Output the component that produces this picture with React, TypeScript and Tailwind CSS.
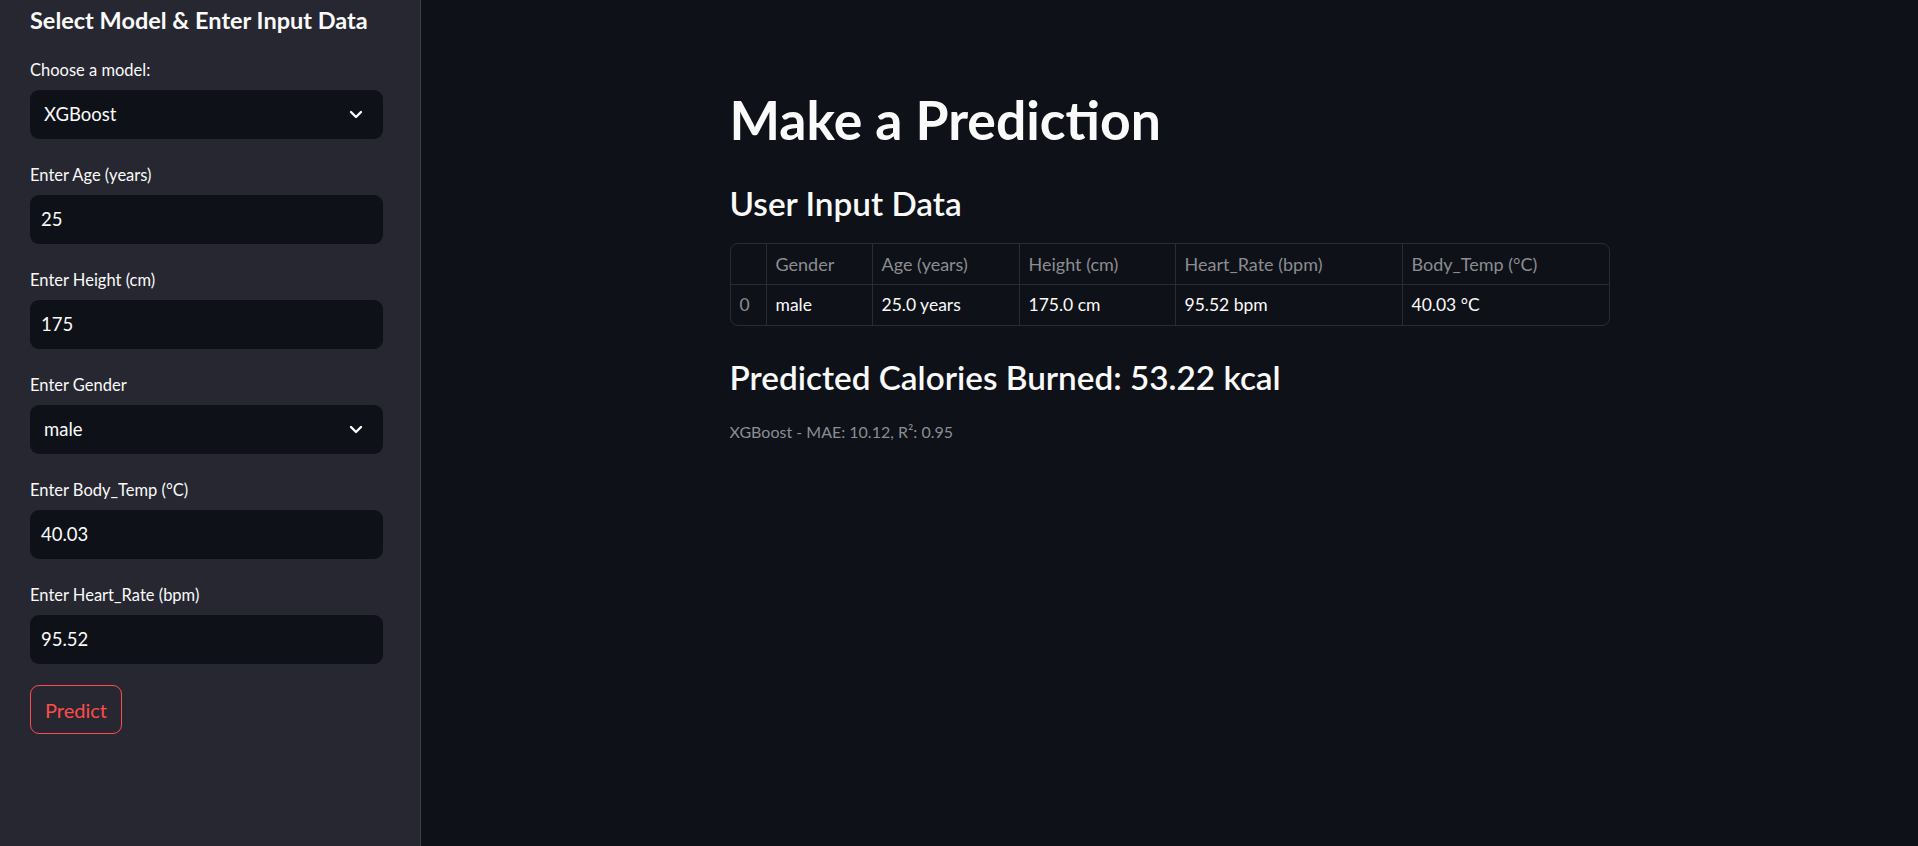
import React from "react";

const font = { fontFamily: "Lato, 'Noto Sans', sans-serif" };

const Chevron = () => (
  <svg width="14" height="9" viewBox="0 0 14 9" fill="none">
    <path d="M2 2l5 5 5-5" stroke="#fafafa" strokeWidth="2.4" strokeLinecap="round" strokeLinejoin="round" />
  </svg>
);

const Field = ({ label, value, select }: { label: string; value: string; select?: boolean }) => (
  <div className="flex flex-col">
    <div className="h-[24px] flex items-center text-[16.5px] text-[#fafafa]">{label}</div>
    <div className="mt-[8px] h-[49px] w-[353px] rounded-[9px] bg-[#0e1117] flex items-center justify-between text-[18.5px] text-[#fafafa]">
      <span className={select ? "pl-[14px]" : "pl-[11px]"}>{value}</span>
      {select && (
        <span className="pr-[20px]">
          <Chevron />
        </span>
      )}
    </div>
  </div>
);

const cols = [
  { name: "", w: "w-[36px]" },
  { name: "Gender", w: "w-[106px]" },
  { name: "Age (years)", w: "w-[147px]" },
  { name: "Height (cm)", w: "w-[156px]" },
  { name: "Heart_Rate (bpm)", w: "w-[227px]" },
  { name: "Body_Temp (°C)", w: "flex-1" },
];

const row = ["0", "male", "25.0 years", "175.0 cm", "95.52 bpm", "40.03 °C"];

export default function App() {
  return (
    <div className="flex w-full h-[846px] bg-[#0e1117] overflow-hidden" style={font}>
      <aside className="w-[421px] shrink-0 h-full bg-[#262730] border-r border-[#3b3c45] px-[30px]">
        <div className="h-[41px] flex items-center text-[23.5px] font-bold text-[#fafafa]">
          Select Model &amp; Enter Input Data
        </div>
        <div className="mt-[17px] flex flex-col gap-[24px]">
          <Field label="Choose a model:" value="XGBoost" select />
          <Field label="Enter Age (years)" value="25" />
          <Field label="Enter Height (cm)" value="175" />
          <Field label="Enter Gender" value="male" select />
          <Field label="Enter Body_Temp (°C)" value="40.03" />
          <Field label="Enter Heart_Rate (bpm)" value="95.52" />
        </div>
        <button className="mt-[21px] h-[49px] w-[92px] rounded-[9px] border border-[#ff4b4b] text-[#ff4b4b] text-[20px] flex items-center justify-center">
          Predict
        </button>
      </aside>
      <main className="flex-1 flex justify-center">
        <div className="w-[880px] pt-[86px] flex flex-col text-[#fafafa]">
          <h1 className="h-[66px] leading-[66px] text-[53.5px] font-bold">Make a Prediction</h1>
          <h2 className="mt-[29px] h-[44px] leading-[44px] text-[33.3px] font-semibold">User Input Data</h2>
          <div className="mt-[18px] w-[880px] rounded-[8px] border border-[#2a2c33] overflow-hidden">
            <div className="flex h-[41px] border-b border-[#2a2c33] text-[18px]">
              {cols.map((c, i) => (
                <div
                  key={i}
                  className={`${c.w} flex items-center px-[9px] text-[#8b8d92] ${i < cols.length - 1 ? "border-r border-[#2a2c33]" : ""}`}
                >
                  {c.name}
                </div>
              ))}
            </div>
            <div className="flex h-[40px] text-[17.5px]">
              {row.map((v, i) => (
                <div
                  key={i}
                  className={`${cols[i].w} flex items-center px-[9px] ${i === 0 ? "text-[#8b8d92]" : "text-[#fafafa]"} ${i < row.length - 1 ? "border-r border-[#2a2c33]" : ""}`}
                >
                  {v}
                </div>
              ))}
            </div>
          </div>
          <h3 className="mt-[29px] h-[44px] leading-[44px] text-[33.3px] font-semibold">Predicted Calories Burned: 53.22 kcal</h3>
          <p className="mt-[21px] h-[24px] leading-[24px] text-[16px] text-[#8b8d92]">
            XGBoost - MAE: 10.12, R²: 0.95
          </p>
        </div>
      </main>
    </div>
  );
}
